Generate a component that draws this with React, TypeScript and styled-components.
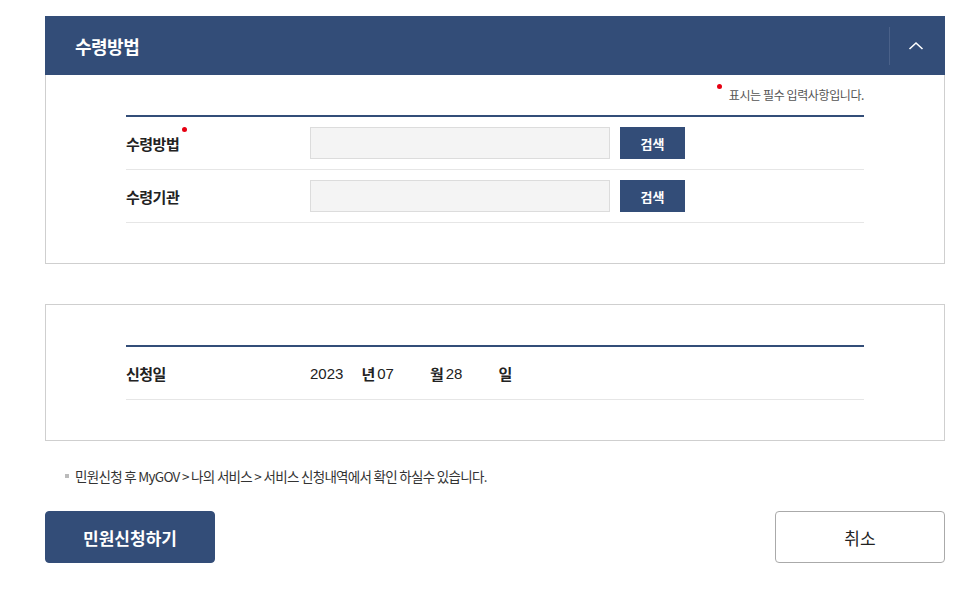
import React from 'react';
import styled, { createGlobalStyle } from 'styled-components';

const GlobalStyle = createGlobalStyle`
  body {
    margin: 0;
    background: #fff;
    font-family: "Noto Sans CJK KR", "Noto Sans", sans-serif;
    color: #222;
  }
`;

const Page = styled.div`
  width: 900px;
  padding: 16px 35px 0 45px;
`;

const Panel = styled.section<{ $top?: boolean }>`
  border: 1px solid #cfcfcf;
  border-top: ${(p) => (p.$top ? 'none' : '1px solid #cfcfcf')};
  margin-bottom: 40px;
`;

const PanelHead = styled.div`
  height: 59px;
  background: #334d78;
  display: flex;
  align-items: center;
`;

const HeadTitle = styled.h3`
  flex: 1;
  margin: 0;
  padding-left: 30px;
  font-size: 18px;
  font-weight: 700;
  color: #fff;
  letter-spacing: -0.5px;
`;

const ToggleBtn = styled.button`
  width: 56px;
  height: 38px;
  border: none;
  border-left: 1px solid #4a6189;
  background: transparent;
  display: flex;
  align-items: center;
  justify-content: center;
  padding: 0 4px 0 0;
  cursor: pointer;
`;

const PanelBody = styled.div<{ $pt: number }>`
  padding: ${(p) => p.$pt}px 80px 40px 80px;
`;

const Notice = styled.p`
  margin: 0 0 12px;
  text-align: right;
  font-size: 12px;
  color: #555;
  letter-spacing: -0.4px;
  line-height: 16px;
`;

const Dot = styled.span`
  display: inline-block;
  width: 5px;
  height: 5px;
  border-radius: 50%;
  background: #e60012;
  vertical-align: top;
  margin-right: 7px;
  margin-top: -3px;
`;

const LabelDot = styled(Dot)`
  margin: -6px 0 0 3px;
`;

const Table = styled.div`
  border-top: 2px solid #334d78;
`;

const Row = styled.div`
  display: flex;
  align-items: center;
  height: 52px;
  border-bottom: 1px solid #e6e6e6;
`;

const Label = styled.div`
  width: 184px;
  font-size: 15px;
  font-weight: 700;
  color: #222;
  letter-spacing: -0.5px;
`;

const Input = styled.input`
  width: 300px;
  height: 32px;
  box-sizing: border-box;
  background: #f4f4f4;
  border: 1px solid #dcdcdc;
  margin-right: 10px;
`;

const SearchBtn = styled.button`
  width: 65px;
  height: 32px;
  border: none;
  background: #334d78;
  color: #fff;
  font-family: inherit;
  font-size: 13px;
  font-weight: 700;
  cursor: pointer;
`;

const DateVal = styled.span<{ $gap: number }>`
  font-family: "Liberation Sans", Arial, sans-serif;
  font-size: 15px;
  color: #222;
  margin-right: ${(p) => p.$gap}px;
`;

const DateUnit = styled.span`
  font-size: 15px;
  font-weight: 700;
  color: #222;
  margin-right: 2px;
`;

const Info = styled.p`
  margin: -14px 0 26px 20px;
  font-size: 13.5px;
  color: #333;
  letter-spacing: -0.7px;
  display: flex;
  align-items: center;
  line-height: 18px;
`;

const Square = styled.span`
  width: 4px;
  height: 4px;
  background: #bbb;
  margin-right: 6px;
`;

const Actions = styled.div`
  display: flex;
  justify-content: space-between;
`;

const ActionBtn = styled.button<{ $primary?: boolean }>`
  width: 170px;
  height: 52px;
  border-radius: 4px;
  font-family: inherit;
  font-size: 17px;
  font-weight: ${(p) => (p.$primary ? 700 : 400)};
  color: ${(p) => (p.$primary ? '#fff' : '#222')};
  background: ${(p) => (p.$primary ? '#334d78' : '#fff')};
  border: 1px solid ${(p) => (p.$primary ? '#334d78' : '#aaa')};
  cursor: pointer;
`;

const App = () => {
  return (
    <Page>
      <GlobalStyle />
      <PanelHead>
        <HeadTitle>수령방법</HeadTitle>
        <ToggleBtn aria-label="접기">
          <svg width="16" height="10" viewBox="0 0 16 10">
            <path d="M1.5 8 L8 2 L14.5 8" fill="none" stroke="#fff" strokeWidth="1.6" />
          </svg>
        </ToggleBtn>
      </PanelHead>
      <Panel $top>
        <PanelBody $pt={12}>
          <Notice>
            <Dot />표시는 필수 입력사항입니다.
          </Notice>
          <Table>
            <Row>
              <Label>
                수령방법<LabelDot />
              </Label>
              <Input />
              <SearchBtn>검색</SearchBtn>
            </Row>
            <Row>
              <Label>수령기관</Label>
              <Input />
              <SearchBtn>검색</SearchBtn>
            </Row>
          </Table>
        </PanelBody>
      </Panel>
      <Panel>
        <PanelBody $pt={40}>
          <Table>
            <Row>
              <Label>신청일</Label>
              <DateVal $gap={18}>2023</DateVal>
              <DateUnit>년</DateUnit>
              <DateVal $gap={36}>07</DateVal>
              <DateUnit>월</DateUnit>
              <DateVal $gap={36}>28</DateVal>
              <DateUnit>일</DateUnit>
            </Row>
          </Table>
        </PanelBody>
      </Panel>
      <Info>
        <Square />
        민원신청 후 MyGOV &gt; 나의 서비스 &gt; 서비스 신청내역에서 확인 하실수 있습니다.
      </Info>
      <Actions>
        <ActionBtn $primary>민원신청하기</ActionBtn>
        <ActionBtn>취소</ActionBtn>
      </Actions>
    </Page>
  );
};

export default App;
